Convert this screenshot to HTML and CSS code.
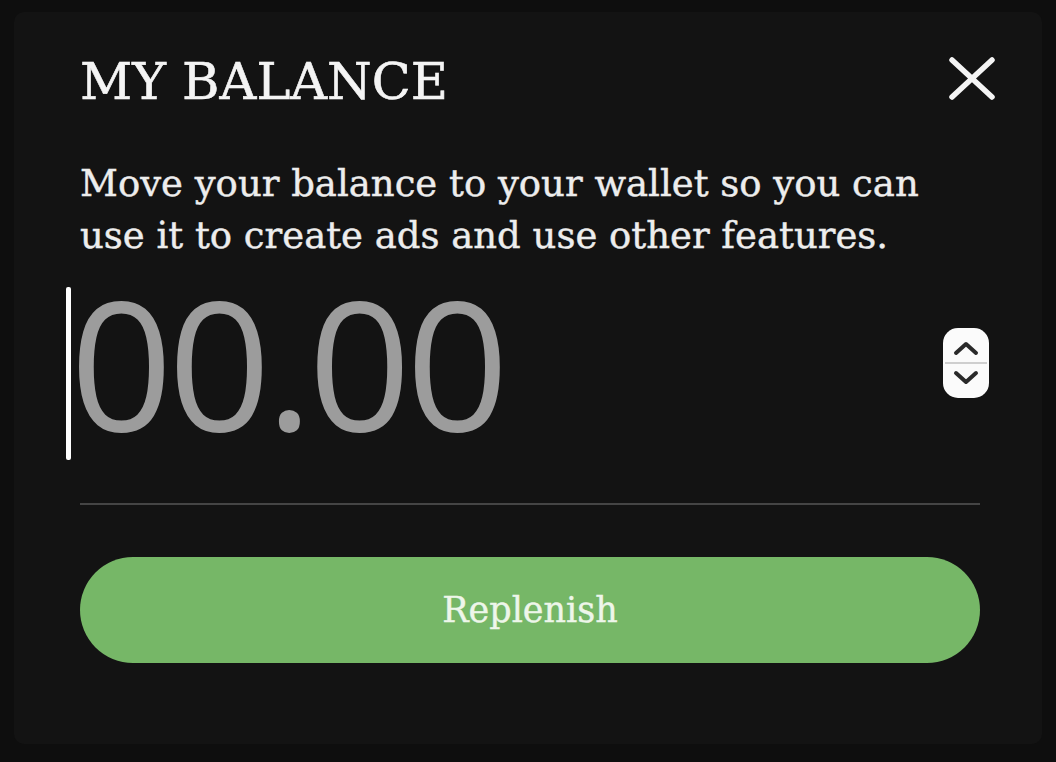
FILE: index.html
```html
<!DOCTYPE html>
<html lang="en">
<head>
<meta charset="utf-8">
<title>My balance</title>
<link rel="stylesheet" href="styles.css">
</head>
<body>
<div class="card">
  <div class="header">
    <h1 class="title">MY BALANCE</h1>
    <button class="close" aria-label="Close">
      <svg width="46" height="43" viewBox="0 0 46 43"><path d="M3 3 L43 40 M43 3 L3 40" stroke="#f4f4f4" stroke-width="5.5" stroke-linecap="round" fill="none"/></svg>
    </button>
  </div>
  <p class="desc">Move your balance to your wallet so you can use it to create ads and use other features.</p>
  <div class="amount-row">
    <div class="amount"><span class="caret"></span><span class="placeholder">00.00</span></div>
    <div class="spinner">
      <svg width="46" height="70" viewBox="0 0 46 70">
        <rect x="0" y="0" width="46" height="70" rx="15" fill="#fbfbfb"/>
        <line x1="2" y1="35" x2="44" y2="35" stroke="#cfcfcf" stroke-width="2"/>
        <path d="M13 25 L23 16 L33 25" stroke="#2a2a2a" stroke-width="4" fill="none" stroke-linecap="round" stroke-linejoin="round"/>
        <path d="M13 45 L23 54 L33 45" stroke="#2a2a2a" stroke-width="4" fill="none" stroke-linecap="round" stroke-linejoin="round"/>
      </svg>
    </div>
  </div>
  <div class="divider"></div>
  <button class="replenish">Replenish</button>
</div>
</body>
</html>
```
FILE: styles.css
```css
html, body {
  margin: 0;
  padding: 0;
  background: #0e0e0e;
}
body {
  width: 1056px;
  height: 762px;
  overflow: hidden;
  font-family: "DejaVu Serif", "Liberation Serif", serif;
  color: #f2f2f2;
}
.card {
  box-sizing: border-box;
  margin: 12px 14px 0 14px;
  height: 732px;
  background: #131313;
  border-radius: 10px;
  padding: 40px 62px 0 66px;
}
.header {
  display: flex;
  justify-content: space-between;
  align-items: flex-start;
  margin-right: -15px;
}
.title {
  margin: 0;
  font-size: 51px;
  font-weight: normal;
  line-height: 60px;
  color: #f4f4f4;
  -webkit-text-stroke: 0.6px #f4f4f4;
}
.close {
  background: none;
  border: none;
  padding: 0;
  margin: 5px 0 0 0;
  width: 46px;
  height: 43px;
  display: flex;
}
.desc {
  margin: 46px 0 0 0;
  font-size: 37px;
  line-height: 52px;
  color: #ededed;
  -webkit-text-stroke: 0.4px #ededed;
}
.amount-row {
  display: flex;
  align-items: flex-start;
  justify-content: space-between;
  margin: 10px -9px 0 -14px;
  height: 190px;
}
.amount {
  display: flex;
  align-items: flex-start;
}
.caret {
  width: 5px;
  height: 173px;
  margin-top: 15px;
  background: #ffffff;
  border-radius: 2px;
}
.placeholder {
  font-family: "Open Sans", "Noto Sans", sans-serif;
  font-size: 180px;
  line-height: 180px;
  color: #9c9c9c;
  margin-left: -1px;
  letter-spacing: -5px;
}
.spinner {
  display: flex;
  margin-top: 56px;
}
.divider {
  margin-top: 41px;
  height: 2px;
  background: #454545;
}
.replenish {
  display: block;
  width: 100%;
  height: 106px;
  margin-top: 52px;
  border: none;
  border-radius: 53px;
  background: #76b767;
  color: #eef6ea;
  font-family: "DejaVu Serif", "Liberation Serif", serif;
  font-size: 35px;
  -webkit-text-stroke: 0.4px #eef6ea;
  padding: 0;
}
```
